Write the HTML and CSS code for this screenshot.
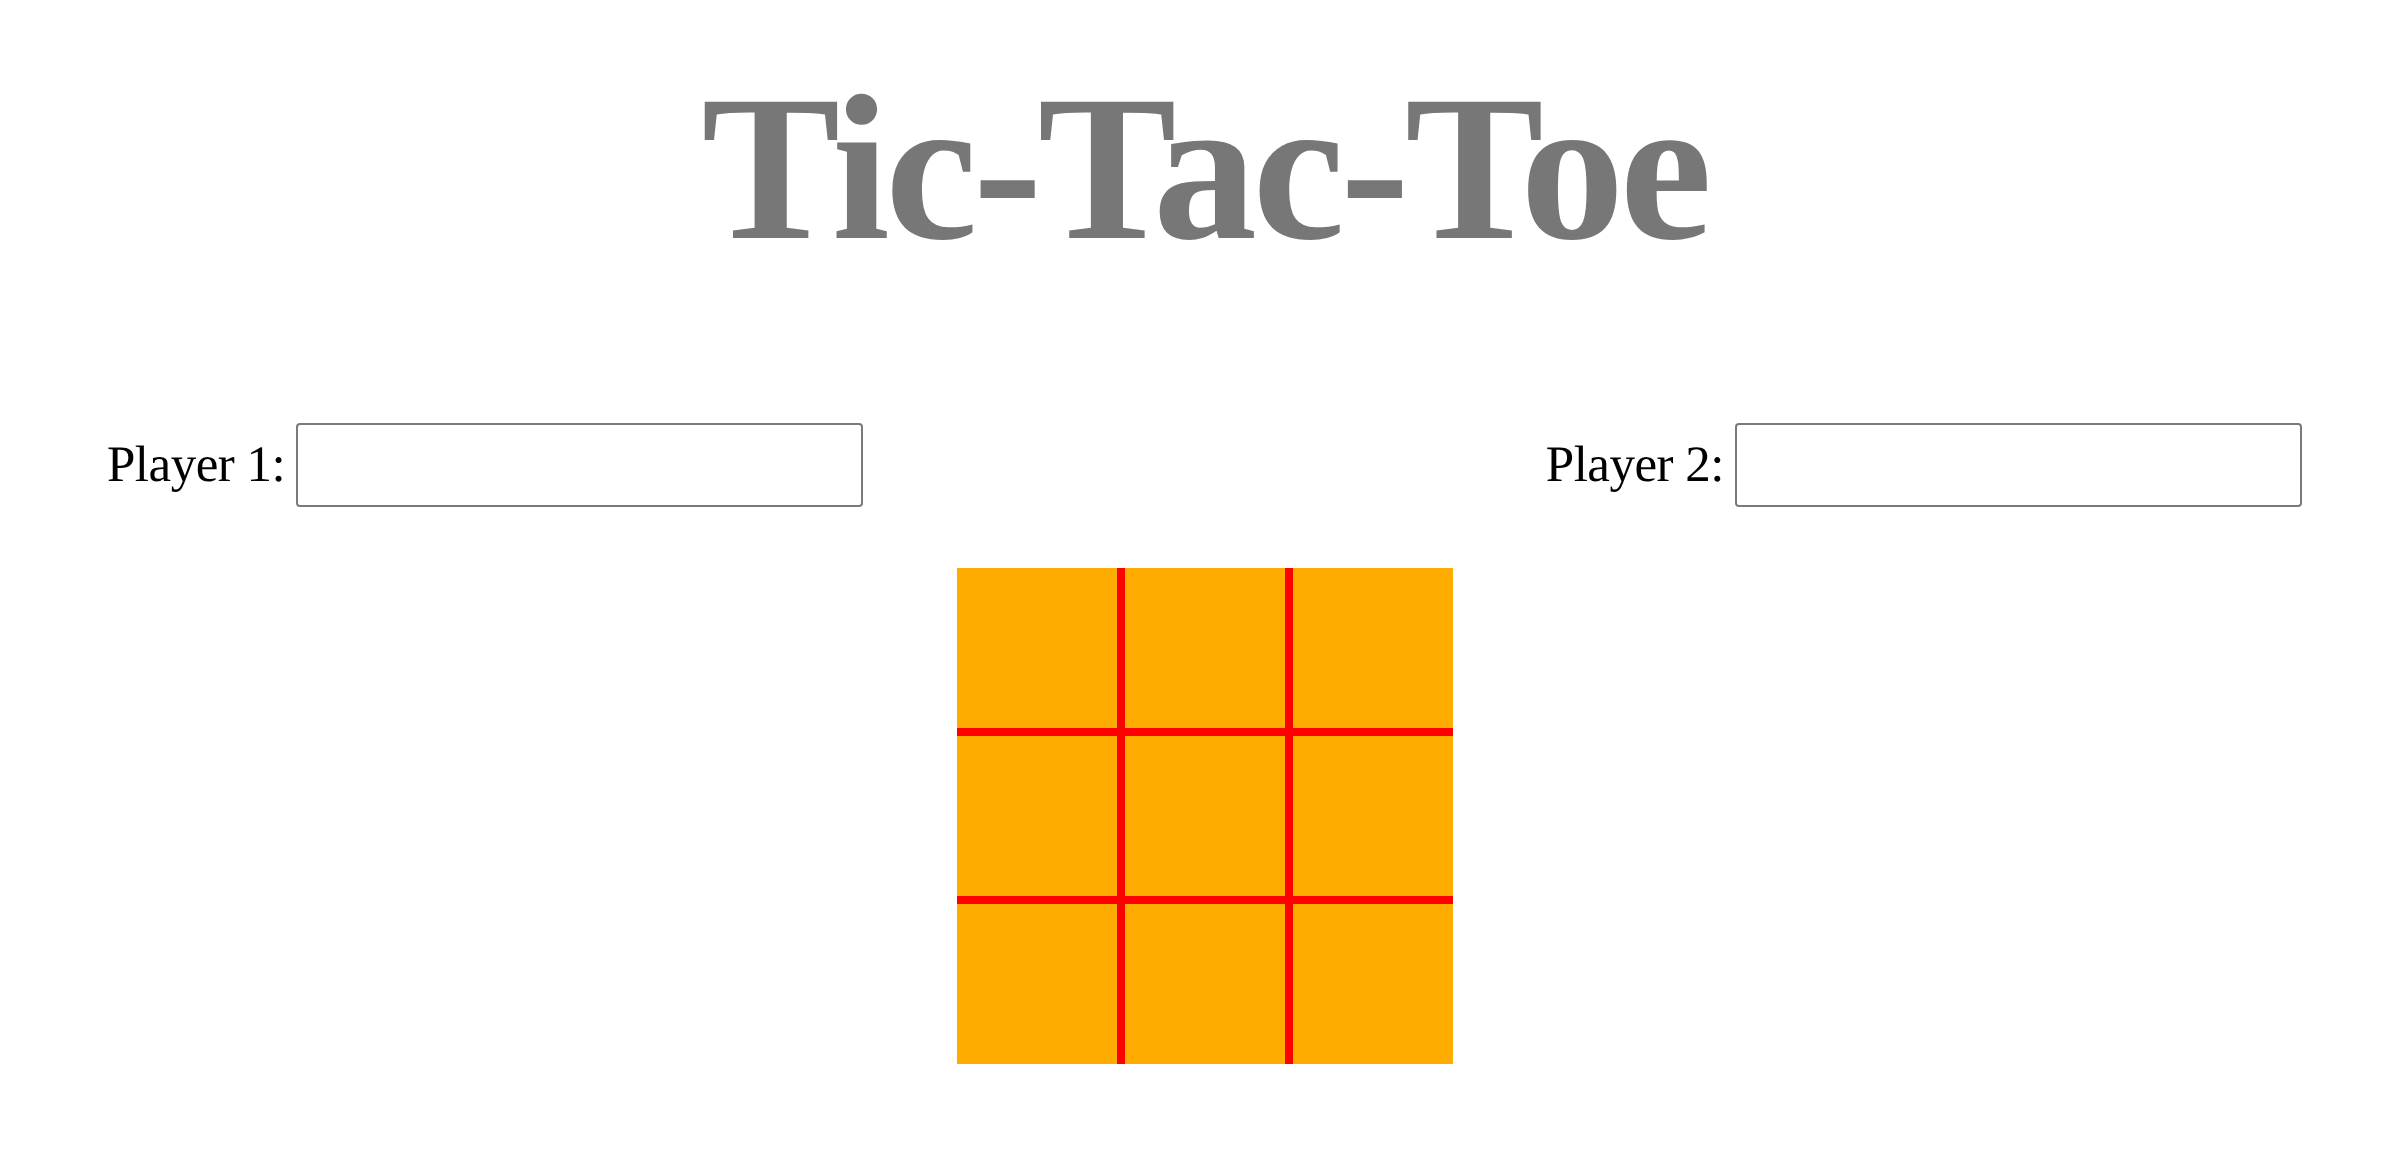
FILE: index.html
```html
<!DOCTYPE html>
<html lang="en">
<head>
<meta charset="utf-8">
<title>Tic-Tac-Toe</title>
<link rel="stylesheet" href="styles.css">
</head>
<body>
<div class="page">
  <h1 class="title">Tic-Tac-Toe</h1>
  <div class="players">
    <div class="player">
      <label class="player-label" for="p1">Player 1:</label>
      <input class="player-input" id="p1" type="text">
    </div>
    <div class="player">
      <label class="player-label" for="p2">Player 2:</label>
      <input class="player-input" id="p2" type="text">
    </div>
  </div>
  <div class="board-wrap">
    <div class="board">
      <div class="cell"></div><div class="cell"></div><div class="cell"></div>
      <div class="cell"></div><div class="cell"></div><div class="cell"></div>
      <div class="cell"></div><div class="cell"></div><div class="cell"></div>
    </div>
  </div>
</div>
</body>
</html>
```

FILE: styles.css
```css
html, body {
  margin: 0;
  padding: 0;
  background: #ffffff;
}

.page {
  padding: 64px 0 0 23px;
  font-family: "Liberation Serif", "Times New Roman", serif;
  text-rendering: geometricPrecision;
}

.title {
  margin: 0;
  text-align: center;
  font-family: "Liberation Serif", "Times New Roman", serif;
  font-weight: bold;
  font-size: 208px;
  line-height: 1;
  letter-spacing: -4.5px;
  color: #777777;
  height: 203px;
}

.players {
  margin-top: 156px;
  display: flex;
  justify-content: space-between;
  align-items: center;
  padding: 0 84px 0 84px;
}

.player {
  display: flex;
  align-items: center;
  gap: 11px;
}

.player-label {
  font-size: 51px;
  color: #000000;
  line-height: 1;
  letter-spacing: -0.5px;
}

.player-input {
  box-sizing: border-box;
  width: 567px;
  height: 84px;
  margin: 0;
  border: 2px solid #7a7a7a;
  border-radius: 4px;
  background: #ffffff;
  font-size: 40px;
  padding: 0 8px;
}

.board-wrap {
  display: flex;
  justify-content: center;
  margin-top: 61px;
}

.board {
  display: grid;
  grid-template-columns: repeat(3, 160px);
  grid-template-rows: repeat(3, 160px);
  gap: 8px;
  background: #ff0000;
}

.cell {
  background: #ffac00;
}
```
